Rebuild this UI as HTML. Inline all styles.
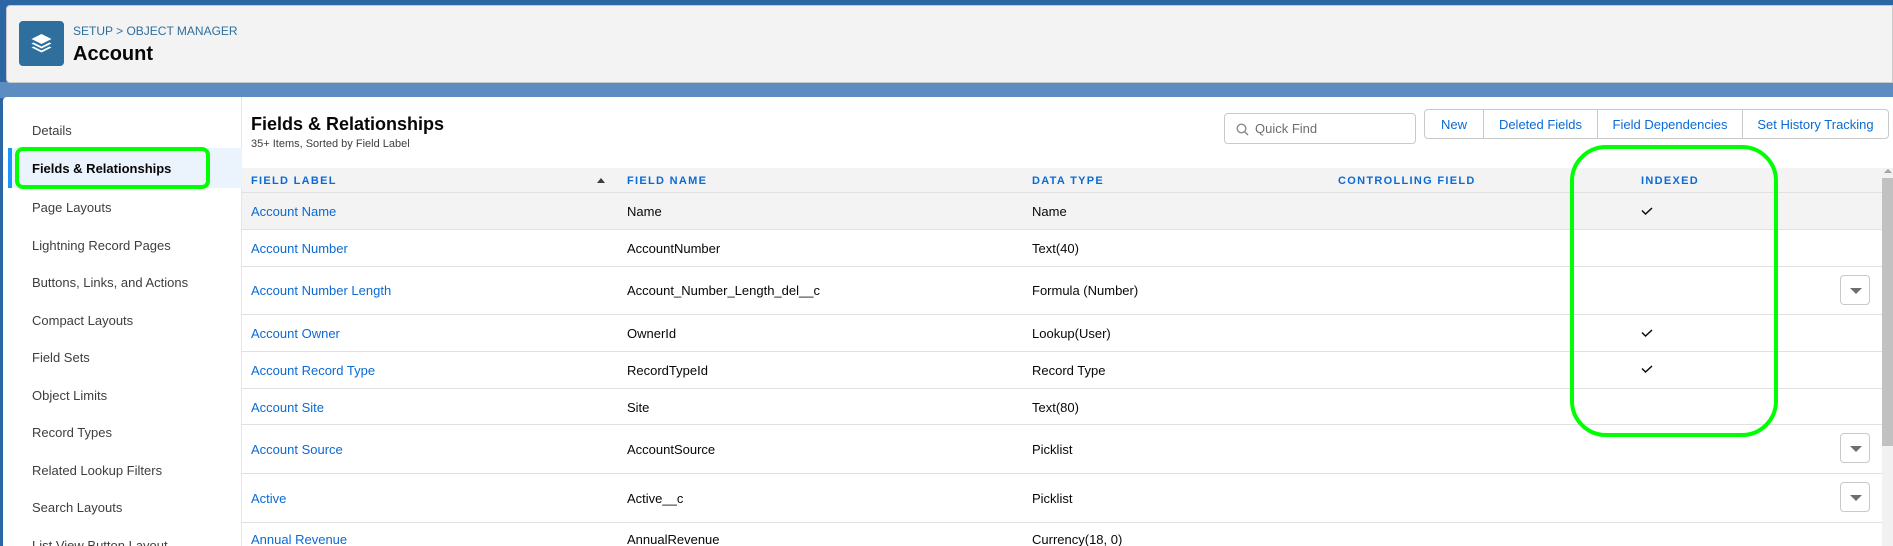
<!DOCTYPE html>
<html><head><meta charset="utf-8"><style>
*{box-sizing:border-box;margin:0;padding:0}
html,body{width:1893px;height:546px;overflow:hidden}
body{font-family:"Liberation Sans",sans-serif;background:#2c66a5;position:relative;color:#080707}
.a{position:absolute}
.band{left:0;top:82px;width:1893px;height:16px;background:#5c8cc0}
.card{left:6px;top:5px;width:1887px;height:78px;background:#f3f3f3;border:1px solid #c9c9c9;border-radius:4px 0 0 4px}
.icon{left:19px;top:21px;width:45px;height:45px;background:#2e6f9e;border-radius:4px}
.crumb{left:73px;top:24px;font-size:12px;color:#2e6f9e}
.title{left:73px;top:43px;font-size:20px;font-weight:bold}
.panel{left:3px;top:97px;width:1890px;height:460px;background:#fff;border-radius:4px 0 0 0}
.nav{left:3px;top:97px;width:239px;height:460px;border-right:1px solid #e5e5e5}
.ni{position:absolute;left:32px;font-size:13px;color:#3e3e3c}
.sel{left:8px;top:148px;width:234px;height:40px;background:#ebf3fd;border-left:4px solid #1b96ff}
.gbox{border:4px solid #0f0;border-radius:8px}
.h1{left:251px;top:114px;font-size:18px;font-weight:bold}
.sub{left:251px;top:138px;font-size:11px;color:#3e3e3c}
.qf{left:1224px;top:113px;width:192px;height:31px;border:1px solid #c9c9c9;border-radius:4px;font-size:13px;color:#706e6b;padding:7px 0 0 30px}
.btns{left:1424px;top:109px;width:465px;height:30px;border:1px solid #c9c9c9;border-radius:4px;display:flex}
.btns div{font-size:13px;color:#0b6ad4;border-right:1px solid #c9c9c9;text-align:center;padding-top:7px}
.th{left:242px;top:168px;width:1640px;height:25px;background:#f3f3f3;border-bottom:1px solid #e0e0e0}
.hd{position:absolute;top:175px;font-size:11px;font-weight:bold;color:#0b6ad4;letter-spacing:1.3px}
.row{position:absolute;left:242px;width:1640px;border-bottom:1px solid #e0e0e0}
.c{position:absolute;font-size:13px}
.lnk{color:#0b6ad4}
.dd{position:absolute;left:1840px;width:30px;height:30px;border:1px solid #c9c9c9;border-radius:4px;background:#fff}
.dd:after{content:"";position:absolute;left:9px;top:12px;border-left:6px solid transparent;border-right:6px solid transparent;border-top:6px solid #706e6b}
.chk{position:absolute;left:1641px;width:12px;height:8px}
</style></head><body>
<div class="a band"></div>
<div class="a card"></div>
<div class="a icon"><svg width="45" height="45" viewBox="0 0 45 45"><g fill="#fff"><path d="M22.5 13l10 5-10 5-10-5z"/><path d="M14.5 21.5l8 4 8-4 2 1-10 5-10-5z"/><path d="M14.5 25.5l8 4 8-4 2 1-10 5-10-5z"/></g></svg></div>
<div class="a crumb">SETUP &gt; OBJECT MANAGER</div>
<div class="a title">Account</div>
<div class="a panel"></div>
<div class="a nav"></div>
<div class="a sel"></div>
<div class="ni" style="top:123px">Details</div>
<div class="ni" style="top:161px;font-weight:bold;color:#080707">Fields &amp; Relationships</div>
<div class="ni" style="top:200px">Page Layouts</div>
<div class="ni" style="top:238px">Lightning Record Pages</div>
<div class="ni" style="top:275px">Buttons, Links, and Actions</div>
<div class="ni" style="top:313px">Compact Layouts</div>
<div class="ni" style="top:350px">Field Sets</div>
<div class="ni" style="top:388px">Object Limits</div>
<div class="ni" style="top:425px">Record Types</div>
<div class="ni" style="top:463px">Related Lookup Filters</div>
<div class="ni" style="top:500px">Search Layouts</div>
<div class="ni" style="top:538px">List View Button Layout</div>
<div class="a gbox" style="left:15px;top:147px;width:195px;height:42px"></div>
<div class="a h1">Fields &amp; Relationships</div>
<div class="a sub">35+ Items, Sorted by Field Label</div>
<div class="a qf"><svg class="a" style="left:11px;top:9px" width="13" height="13" viewBox="0 0 13 13"><circle cx="5.5" cy="5.5" r="4.3" fill="none" stroke="#8a8a8a" stroke-width="1.4"/><path d="M8.6 8.6L12 12" stroke="#8a8a8a" stroke-width="1.5"/></svg>Quick Find</div>
<div class="a btns"><div style="width:59px">New</div><div style="width:114px">Deleted Fields</div><div style="width:145px">Field Dependencies</div><div style="width:145px;border:none">Set History Tracking</div></div>
<div class="a th"></div>
<div class="hd" style="left:251px">FIELD LABEL</div>
<div class="a" style="left:597px;top:178px;border-left:4px solid transparent;border-right:4px solid transparent;border-bottom:5px solid #3e3e3c"></div>
<div class="hd" style="left:627px">FIELD NAME</div>
<div class="hd" style="left:1032px">DATA TYPE</div>
<div class="hd" style="left:1338px">CONTROLLING FIELD</div>
<div class="hd" style="left:1641px">INDEXED</div>

<div class="row" style="top:193px;height:37px;background:#f3f3f3"></div>
<div class="row" style="top:230px;height:37px"></div>
<div class="row" style="top:267px;height:48px"></div>
<div class="row" style="top:315px;height:37px"></div>
<div class="row" style="top:352px;height:37px"></div>
<div class="row" style="top:389px;height:36px"></div>
<div class="row" style="top:425px;height:49px"></div>
<div class="row" style="top:474px;height:49px"></div>

<div class="c lnk" style="left:251px;top:204px">Account Name</div><div class="c" style="left:627px;top:204px">Name</div><div class="c" style="left:1032px;top:204px">Name</div>
<div class="c lnk" style="left:251px;top:241px">Account Number</div><div class="c" style="left:627px;top:241px">AccountNumber</div><div class="c" style="left:1032px;top:241px">Text(40)</div>
<div class="c lnk" style="left:251px;top:283px">Account Number Length</div><div class="c" style="left:627px;top:283px">Account_Number_Length_del__c</div><div class="c" style="left:1032px;top:283px">Formula (Number)</div>
<div class="c lnk" style="left:251px;top:326px">Account Owner</div><div class="c" style="left:627px;top:326px">OwnerId</div><div class="c" style="left:1032px;top:326px">Lookup(User)</div>
<div class="c lnk" style="left:251px;top:363px">Account Record Type</div><div class="c" style="left:627px;top:363px">RecordTypeId</div><div class="c" style="left:1032px;top:363px">Record Type</div>
<div class="c lnk" style="left:251px;top:400px">Account Site</div><div class="c" style="left:627px;top:400px">Site</div><div class="c" style="left:1032px;top:400px">Text(80)</div>
<div class="c lnk" style="left:251px;top:442px">Account Source</div><div class="c" style="left:627px;top:442px">AccountSource</div><div class="c" style="left:1032px;top:442px">Picklist</div>
<div class="c lnk" style="left:251px;top:491px">Active</div><div class="c" style="left:627px;top:491px">Active__c</div><div class="c" style="left:1032px;top:491px">Picklist</div>
<div class="c lnk" style="left:251px;top:532px">Annual Revenue</div><div class="c" style="left:627px;top:532px">AnnualRevenue</div><div class="c" style="left:1032px;top:532px">Currency(18, 0)</div>

<svg class="chk" style="top:207px" viewBox="0 0 12 8"><path d="M1 3.5L4.5 7L11 1" fill="none" stroke="#080707" stroke-width="1.4"/></svg>
<svg class="chk" style="top:329px" viewBox="0 0 12 8"><path d="M1 3.5L4.5 7L11 1" fill="none" stroke="#080707" stroke-width="1.4"/></svg>
<svg class="chk" style="top:365px" viewBox="0 0 12 8"><path d="M1 3.5L4.5 7L11 1" fill="none" stroke="#080707" stroke-width="1.4"/></svg>

<div class="dd" style="top:275px"></div>
<div class="dd" style="top:433px"></div>
<div class="dd" style="top:482px"></div>

<div class="a" style="left:1882px;top:168px;width:11px;height:390px;background:#f1f1f1"></div>
<div class="a" style="left:1882px;top:178px;width:11px;height:268px;background:#c1c1c1"></div>
<div class="a" style="left:1884px;top:169px;border-left:4px solid transparent;border-right:4px solid transparent;border-bottom:4px solid #a3a3a3"></div>

<div class="a gbox" style="left:1570px;top:145px;width:208px;height:292px;border-radius:36px"></div>
</body></html>
